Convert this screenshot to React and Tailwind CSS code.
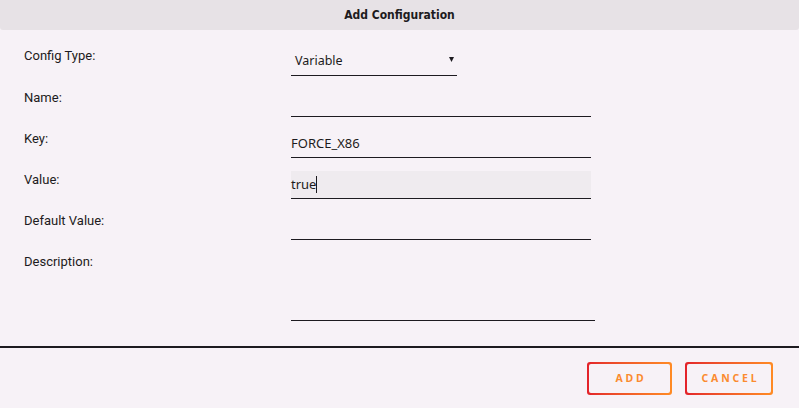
import React from "react";

const labelFont = { fontFamily: "Roboto, 'Liberation Sans', sans-serif" };

function Row({ label, children, className = "" }) {
  return (
    <div className={`grid grid-cols-[267px_1fr] ${className}`}>
      <div className="text-[13px] leading-[18px] text-[#1d1b20]" style={labelFont}>
        {label}
      </div>
      <div>{children}</div>
    </div>
  );
}

function Underlined({ value, filled, caret }) {
  return (
    <div
      className={`w-[300px] h-[28px] border-b border-[#1d1b20] flex items-center text-[13px] text-[#1d1b20] ${
        filled ? "bg-[#efebef]" : ""
      }`}
      style={{ fontFamily: "'Noto Sans', sans-serif" }}
    >
      <span>{value}</span>
      {caret && <span className="w-px h-[17px] bg-[#1d1b20]" />}
    </div>
  );
}

function GradientButton({ children, width }) {
  return (
    <div
      className={`${width} h-[33px] rounded-[3px] p-[2px] bg-gradient-to-r from-[#e3212a] to-[#ff8b24]`}
    >
      <div className="w-full h-full rounded-[2px] bg-[#f7f2f7] flex items-center justify-center">
        <span
          className="text-[10.5px] font-bold tracking-[0.27em] text-[#fb8b2f] pl-[3px]"
          style={{ fontFamily: "'Noto Sans', sans-serif" }}
        >
          {children}
        </span>
      </div>
    </div>
  );
}

export default function App() {
  return (
    <div className="w-[799px] h-[408px] bg-[#f7f2f7] flex flex-col overflow-hidden">
      <div className="h-[30px] bg-[#e7e2e6] rounded-b-[3px] flex items-center justify-center">
        <span
          className="text-[12px] font-bold text-[#1d1b20]"
          style={{ fontFamily: "'DejaVu Sans Condensed', 'DejaVu Sans', sans-serif", fontStretch: "condensed" }}
        >
          Add Configuration
        </span>
      </div>

      <div className="pl-[24px] pt-[17px] flex flex-col gap-[13px] h-[316px]">
        <Row label="Config Type:">
          <div
            className="w-[166px] h-[29px] border-b border-[#1d1b20] flex items-center justify-between pl-[4px] pr-[3px] text-[12.5px] text-[#1d1b20]"
            style={{ fontFamily: "'Noto Sans', sans-serif" }}
          >
            <span className="pt-[1px]">Variable</span>
            <svg width="5" height="5" viewBox="0 0 5 5" className="-mt-[3px]">
              <path d="M0 0 H5 L2.5 5 Z" fill="#1d1b20" />
            </svg>
          </div>
        </Row>
        <Row label="Name:">
          <Underlined value="" />
        </Row>
        <Row label="Key:">
          <Underlined value="FORCE_X86" />
        </Row>
        <Row label="Value:">
          <Underlined value="true" filled caret />
        </Row>
        <Row label="Default Value:">
          <Underlined value="" />
        </Row>
        <Row label="Description:">
          <div className="w-[304px] h-[68px] border-b border-[#1d1b20]" />
        </Row>
      </div>

      <div className="h-[2px] bg-[#1d1b20]" />

      <div className="flex justify-end gap-[13px] pr-[26px] pt-[14px]">
        <GradientButton width="w-[85px]">ADD</GradientButton>
        <GradientButton width="w-[88px]">CANCEL</GradientButton>
      </div>
    </div>
  );
}
